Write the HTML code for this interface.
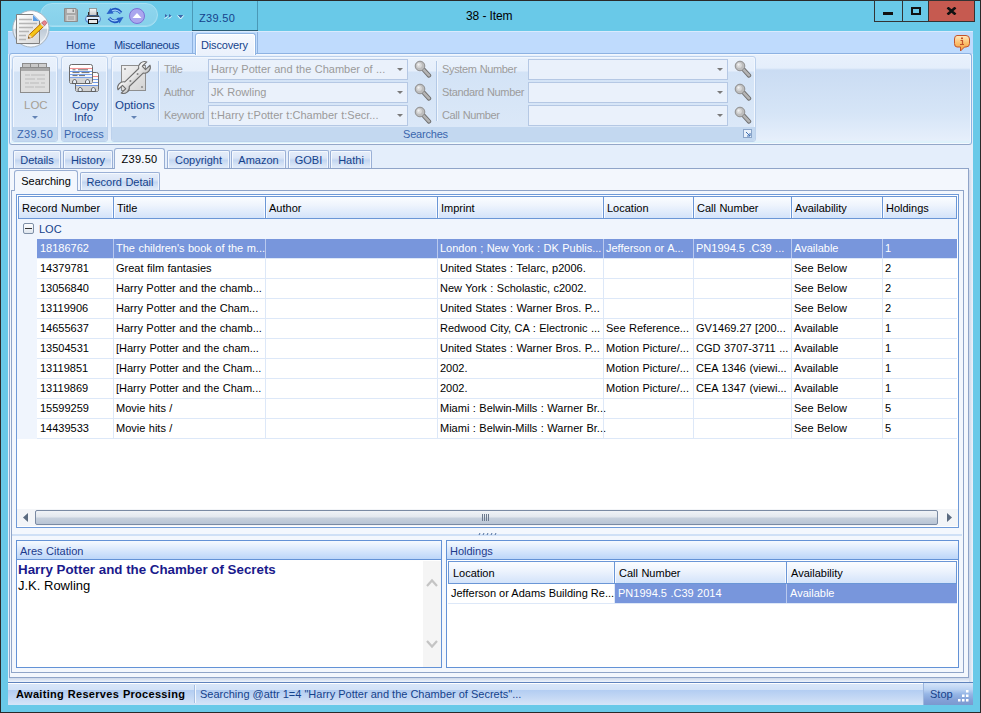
<!DOCTYPE html>
<html><head><meta charset="utf-8">
<style>
*{margin:0;padding:0;box-sizing:border-box}
html,body{width:981px;height:713px;overflow:hidden}
body{position:relative;background:#2a2a2a;font-family:"Liberation Sans",sans-serif;font-size:11px;color:#000;letter-spacing:0;word-spacing:0.4px}
.a{position:absolute}
.t{position:absolute;white-space:nowrap;line-height:12px}
.blue{color:#15428b}
</style></head><body>
<div class="a" style="left:1px;top:1px;width:979px;height:711px;background:#69c9e8"></div>
<div class="a" style="left:8px;top:31px;width:965px;height:674px;background:#e4eefb"></div>
<!-- QAT pill -->
<div class="a" style="left:40px;top:3px;width:118px;height:24px;border-radius:12px;background:linear-gradient(#8fd6ee,#86d0ea);border:1px solid #a7e0f3;box-shadow:inset 0 -1px 0 #9ad9ef"></div>
<!-- app button -->
<svg class="a" style="z-index:6;left:12px;top:10px" width="40" height="40" viewBox="0 0 40 40">
  <defs>
   <linearGradient id="cg" x1="0" y1="0" x2="0" y2="1"><stop offset="0" stop-color="#ffffff"/><stop offset=".48" stop-color="#eef1f4"/><stop offset=".52" stop-color="#bfcad6"/><stop offset=".8" stop-color="#d4dde6"/><stop offset="1" stop-color="#f2f5f8"/></linearGradient>
   <linearGradient id="dg" x1="0" y1="0" x2="1" y2="1"><stop offset="0" stop-color="#ffffff"/><stop offset="1" stop-color="#d6d6d6"/></linearGradient>
  </defs>
  <circle cx="18.9" cy="18.9" r="18.2" fill="url(#cg)" stroke="#a9b6c3" stroke-width="1"/>
  <circle cx="18.9" cy="18.9" r="16.8" fill="none" stroke="#ffffff" stroke-opacity=".7" stroke-width="1"/>
  <path d="M4.5 4.5 H21 L27.5 11 V33.5 H4.5 Z" fill="url(#dg)" stroke="#7f7f7f" stroke-width="1"/>
  <path d="M21 4.5 L27.5 11 H21 Z" fill="#5d9fe6"/><path d="M21.5 5 L27 10.5" stroke="#e8f3ff" stroke-width=".8"/>
  <path d="M7 9.5h13M7 13.5h18M7 17.5h14M7 21.5h10M7 25.5h7M7 29.5h7" stroke="#b5b5b5" stroke-width="1.3"/>
  <g transform="translate(16.3 28.3) rotate(-43.5)">
    <path d="M0 0 L3.5 -2 H20 V2 H3.5 Z" fill="#f5c518" stroke="#b26500" stroke-width=".9" stroke-linejoin="round"/>
    <path d="M0 0 L3.5 -2 V2 Z" fill="#f6d9b0"/>
    <path d="M0 0 L1.3 -.75 V.75 Z" fill="#111"/>
    <rect x="18.5" y="-2" width="2" height="4" fill="#d8d8d8"/>
    <path d="M20.5 -2 H22.5 A2 2 0 0 1 22.5 2 H20.5 Z" fill="#e8848e" stroke="#b05060" stroke-width=".6"/>
  </g>
</svg>
<!-- save -->
<svg class="a" style="left:64px;top:8px" width="14" height="14" viewBox="0 0 14 14">
  <path d="M.5 .5H12L13.5 2V13.5H.5Z" fill="#a9a9a9" stroke="#8c8c8c"/>
  <rect x="3" y="1" width="8" height="4" fill="#d8d8d8"/><rect x="8.5" y="1.5" width="1.5" height="2.5" fill="#888"/>
  <rect x="2.5" y="7" width="9" height="6" fill="#d0d0d0"/><path d="M4 9h6M4 11h6" stroke="#9a9a9a"/>
</svg>
<!-- print -->
<svg class="a" style="left:84px;top:7px" width="18" height="18" viewBox="0 0 18 18">
  <defs><linearGradient id="pp" x1="0" y1="0" x2="0" y2="1"><stop offset="0" stop-color="#fafafa"/><stop offset="1" stop-color="#bdbdbd"/></linearGradient>
  <linearGradient id="pb" x1="0" y1="0" x2="0" y2="1"><stop offset="0" stop-color="#ffffff"/><stop offset=".5" stop-color="#cfe4fb"/><stop offset="1" stop-color="#6fa4e6"/></linearGradient></defs>
  <rect x="4" y="5" width="10" height="5" fill="#2b2b2b"/>
  <rect x="5.5" y="1.5" width="7" height="8" fill="url(#pp)" stroke="#888" stroke-width=".8"/>
  <rect x="1.5" y="8.5" width="15" height="7" rx="3.5" fill="url(#pb)" stroke="#4b7fc8" stroke-width="1"/>
  <path d="M3 9.2h12" stroke="#222" stroke-width="1.2"/>
  <path d="M6 12.5h6" stroke="#1f3f7a" stroke-width="1"/>
  <rect x="4.5" y="12.5" width="9" height="4" fill="#e8e8e8" stroke="#111" stroke-width="1"/>
</svg>
<!-- refresh -->
<svg class="a" style="left:106px;top:7px" width="18" height="18" viewBox="0 0 18 18">
  <path d="M4 5 Q9.5 -0.5 15 5.8" stroke="#1f55c0" stroke-width="3.4" fill="none"/>
  <path d="M4.3 5 Q9.5 0.8 14.5 5.6" stroke="#9fd0fb" stroke-width="1.2" fill="none"/>
  <path d="M0.5 7 L4.5 1 L7.5 6.5 Z" fill="#2a63c9"/>
  <path d="M14 12 Q8.5 17.5 3 11.2" stroke="#1f55c0" stroke-width="3.4" fill="none"/>
  <path d="M13.7 12 Q8.5 16.2 3.5 11.5" stroke="#9fd0fb" stroke-width="1.2" fill="none"/>
  <path d="M17.5 10 L13.5 16.5 L10.5 11 Z" fill="#2a63c9"/>
</svg>
<!-- up circle -->
<svg class="a" style="left:129px;top:8px" width="16" height="16" viewBox="0 0 16 16">
  <circle cx="8" cy="8" r="7.5" fill="#aaa6ee" stroke="#7d70d6"/>
  <path d="M3.5 10 L8 5 L12.5 10 Z" fill="#fff"/>
</svg>
<!-- >> v -->
<svg class="a" style="left:163px;top:12px" width="22" height="10" viewBox="0 0 22 10">
  <path d="M1.5 6.5 L4.5 4.5 M5.5 6.5 L8.5 4.5" stroke="#f4fbff" stroke-width="1"/>
  <path d="M2 2 L4.4 3.8 L2 5.4 Z M6 2 L8.4 3.8 L6 5.4 Z" fill="#3d64a8"/>
  <path d="M14.5 3.5 L17.6 7 L20.7 3.5" stroke="#f4fbff" stroke-width="1" fill="none"/>
  <path d="M15 3 H20.2 L17.6 6 Z" fill="#3d64a8"/>
</svg>
<!-- contextual header -->
<div class="a" style="left:192px;top:1px;width:1px;height:30px;background:#4b98b6"></div>
<div class="a" style="left:257px;top:1px;width:1px;height:30px;background:#4b98b6"></div>
<div class="a" style="left:192px;top:30px;width:66px;height:1px;background:#2b5d73"></div>
<div class="t blue" style="left:199px;top:12px;letter-spacing:0.3px">Z39.50</div>
<!-- title -->
<div class="t" style="left:466px;top:10px;color:#000;font-size:12px;letter-spacing:-0.1px;word-spacing:0">38 - Item</div>
<!-- window controls -->
<div class="a" style="left:874px;top:0px;width:101px;height:22px;border:1px solid #333;background:#69c9e8"></div>
<div class="a" style="left:902px;top:0px;width:1px;height:22px;background:#333"></div>
<div class="a" style="left:928px;top:0px;width:1px;height:22px;background:#333"></div>
<div class="a" style="left:929px;top:1px;width:45px;height:20px;background:#c65a50"></div>
<div class="a" style="left:883px;top:12px;width:10px;height:3px;background:#111"></div>
<div class="a" style="left:911px;top:7px;width:10px;height:8px;border:2px solid #111"></div>
<svg class="a" style="left:946px;top:7px" width="11" height="8" viewBox="0 0 11 8"><path d="M1.5 0.5 L9.5 7.5 M9.5 0.5 L1.5 7.5" stroke="#111" stroke-width="2.6"/></svg>
<!-- ribbon tab row -->
<div class="a" style="left:8px;top:31px;width:965px;height:23px;background:#bfdbfd"></div>
<div class="t blue" style="left:66px;top:39px">Home</div>
<div class="t blue" style="left:114px;top:39px;letter-spacing:-0.35px">Miscellaneous</div>
<div class="a" style="left:192px;top:31px;width:1px;height:22px;background:#8fb2df"></div>
<div class="a" style="left:257px;top:31px;width:1px;height:22px;background:#8fb2df"></div>
<div class="a" style="left:193px;top:31px;width:64px;height:1px;background:#e6f1fd"></div>
<!-- ribbon body -->
<div class="a" style="left:9px;top:53px;width:963px;height:92px;border:1px solid #8db2e2;border-bottom-color:#93a7c8;border-radius:3px;background:linear-gradient(#e9f1fc 0px,#e4eefb 14px,#cadcf3 16px,#d6e5f7 60px,#e6effb 86px,#d9f3fb 89px);box-shadow:inset 0 0 0 1px #f3f8fe"></div>
<div class="a" style="left:8px;top:33px;width:1px;height:0"></div>
<div class="a" style="left:195px;top:33px;width:61px;height:22px;border:1px solid #8fb4e2;border-bottom:none;border-radius:3px 3px 0 0;background:linear-gradient(#f6f9fe,#eaf1fc);box-shadow:inset 1px 1px 0 #fff,inset -1px 0 0 #fff"></div>
<div class="t blue" style="left:201px;top:39px;letter-spacing:-0.15px">Discovery</div>
<!-- group 1 -->
<div class="a" style="left:12px;top:56px;width:46px;height:86px;border:1px solid #bcd1ec;border-radius:3px;background:linear-gradient(#eaf2fc 0px,#e6effb 14px,#d3e3f6 15px,#dbe8f8 70px);box-shadow:inset 0 0 0 1px #f2f7fe"></div>
<div class="a" style="left:13px;top:127px;width:44px;height:14px;background:#c3d8f0;border-radius:0 0 2px 2px"></div>
<div class="t" style="left:17px;top:128px;letter-spacing:0.3px;color:#3a66ad">Z39.50</div>
<!-- group 2 -->
<div class="a" style="left:61px;top:56px;width:47px;height:86px;border:1px solid #bcd1ec;border-radius:3px;background:linear-gradient(#eaf2fc 0px,#e6effb 14px,#d3e3f6 15px,#dbe8f8 70px);box-shadow:inset 0 0 0 1px #f2f7fe"></div>
<div class="a" style="left:62px;top:127px;width:45px;height:14px;background:#c3d8f0;border-radius:0 0 2px 2px"></div>
<div class="t" style="left:64px;top:128px;color:#3a66ad">Process</div>
<!-- group 3 -->
<div class="a" style="left:111px;top:56px;width:645px;height:86px;border:1px solid #bcd1ec;border-radius:3px;background:linear-gradient(#eaf2fc 0px,#e6effb 14px,#d3e3f6 15px,#dbe8f8 70px);box-shadow:inset 0 0 0 1px #f2f7fe"></div>
<div class="a" style="left:112px;top:127px;width:643px;height:14px;background:#c3d8f0;border-radius:0 0 2px 2px"></div>
<div class="t" style="left:403px;top:128px;color:#3a66ad;letter-spacing:-0.2px">Searches</div>
<svg class="a" style="left:743px;top:129px" width="9" height="9" viewBox="0 0 9 9"><rect x=".5" y=".5" width="8" height="8" fill="#e8f0fa" stroke="#8aa4c8"/><path d="M3 3l4 4M7 4v3H4" stroke="#3f6fb0" fill="none"/></svg>

<!-- LOC icon -->
<svg class="a" style="left:20px;top:63px" width="30" height="30" viewBox="0 0 30 30">
  <rect x="2.5" y=".5" width="8" height="6" fill="#c4c4c4" stroke="#8c8c8c"/>
  <rect x="10.5" y=".5" width="8" height="6" fill="#c9c9c9" stroke="#8c8c8c"/>
  <rect x="18.5" y=".5" width="8" height="6" fill="#cfcfcf" stroke="#8c8c8c"/>
  <rect x=".5" y="4.5" width="29" height="25" fill="#dedede" stroke="#8c8c8c"/>
  <rect x="1" y="5" width="28" height="3" fill="#a9a9a9"/>
  <path d="M5 12h5M11 12h14M5 16h10M17 16h8M5 20h4M10 20h9M21 20h4M5 24h9M15 24h10" stroke="#b9b9b9" stroke-width="1.2"/>
</svg>
<div class="t" style="left:24px;top:99px;color:#a69f94;font-size:11.5px">LOC</div>
<svg class="a" style="left:32px;top:116px" width="6" height="4"><path d="M0 0h6l-3 3z" fill="#6383b5"/></svg>
<!-- Copy info icon -->
<svg class="a" style="left:62px;top:58px" width="44" height="40" viewBox="0 0 44 40">
  <rect x="13.5" y="14.5" width="23" height="19" rx="2" fill="#fafafa" stroke="#6a6a6a"/>
  <path d="M31 18.5h5" stroke="#f08a8a"/><path d="M31 21.5h5M31 24.5h5M14 27.5h22" stroke="#6f9ae8"/>
  <rect x="14" y="28" width="22" height="5" fill="#d2d2d2"/>
  <path d="M16.2 33.5V31L18.2 29L20.2 31V33.5Z M29.4 33.5V31L31.4 29L33.4 31V33.5Z" fill="#e4ecf6" stroke="#555" stroke-width=".9"/>
  <rect x="7.5" y="6.5" width="23" height="19" rx="2" fill="#fff" stroke="#6a6a6a"/>
  <path d="M8 10.5h22" stroke="#f39090" stroke-width="1.1"/>
  <path d="M8 13.5h22M8 16.6h22M8 19.4h22" stroke="#6f9ae8" stroke-width="1"/>
  <path d="M10.5 11.8h3M16 11.8h10M10.5 14.6h7M19.5 14.6h8M10.5 17.6h5M17 17.6h6" stroke="#5a5a5a" stroke-width=".9"/>
  <rect x="8" y="20" width="22" height="5" fill="#d6d6d6"/>
  <path d="M10.6 25.5V23L12.6 21L14.6 23V25.5Z M23.5 25.5V23L25.5 21L27.5 23V25.5Z" fill="#e4ecf6" stroke="#555" stroke-width=".9"/>
</svg>
<div class="t blue" style="left:72px;top:99px;font-size:11.5px">Copy</div>
<div class="t blue" style="left:74px;top:111px;font-size:11.5px">Info</div>
<!-- Options icon -->
<svg class="a" style="left:112px;top:58px" width="44" height="40" viewBox="0 0 44 40">
  <defs><linearGradient id="sq" x1="0" y1="0" x2="1" y2="1"><stop offset="0" stop-color="#f2f2f2"/><stop offset="1" stop-color="#d2d2d2"/></linearGradient>
  <linearGradient id="wr" x1="0" y1="0" x2="0" y2="1"><stop offset="0" stop-color="#fafafa"/><stop offset="1" stop-color="#c8c8c8"/></linearGradient></defs>
  <rect x="9.5" y="7.5" width="24" height="25" fill="url(#sq)" stroke="#8e8e8e"/>
  <circle cx="13" cy="11" r="1" fill="#8a8a8a"/><circle cx="30" cy="29" r="1" fill="#8a8a8a"/>
  <g transform="translate(22 19.5) rotate(-44)">
    <path d="M-9.63 -3.2 L9.63 -3.2 A6 6 0 0 1 20.04 -2.3 L13.8 -2.3 L13.8 2.3 L20.04 2.3 A6 6 0 0 1 9.63 3.2 L-9.63 3.2 A6 6 0 0 1 -20.04 2.3 L-13.8 2.3 L-13.8 -2.3 L-20.04 -2.3 A6 6 0 0 1 -9.63 -3.2 Z" fill="url(#wr)" stroke="#6e6e6e" stroke-width="1.1" stroke-linejoin="round"/>
    <circle cx="-5" cy="0" r="1" fill="#888"/><circle cx="5" cy="0" r="1" fill="#888"/>
  </g>
</svg>
<div class="t blue" style="left:115px;top:99px;font-size:11.5px">Options</div>
<svg class="a" style="left:131px;top:116px" width="6" height="4"><path d="M0 0h6l-3 3z" fill="#6383b5"/></svg>
<!-- separators -->
<div class="a" style="left:158px;top:61px;width:1px;height:60px;background:#b3c9e6;box-shadow:1px 0 0 #f0f6fd"></div>
<div class="a" style="left:436px;top:61px;width:1px;height:60px;background:#b3c9e6;box-shadow:1px 0 0 #f0f6fd"></div>
<!-- labels -->
<div class="t" style="left:164px;top:63px;color:#9c9c9c;letter-spacing:-0.35px">Title</div>
<div class="t" style="left:164px;top:86px;color:#9c9c9c;letter-spacing:-0.35px">Author</div>
<div class="t" style="left:164px;top:109px;color:#9c9c9c;letter-spacing:-0.35px">Keyword</div>
<div class="t" style="left:442px;top:63px;color:#9c9c9c;letter-spacing:-0.35px">System Number</div>
<div class="t" style="left:442px;top:86px;color:#9c9c9c;letter-spacing:-0.35px">Standard Number</div>
<div class="t" style="left:442px;top:109px;color:#9c9c9c;letter-spacing:-0.35px">Call Number</div>
<div class="a" style="left:208px;top:59px;width:200px;height:21px;border:1px solid #b5c8e4;background:#eaf1fb"></div>
<div class="t" style="left:211px;top:63px;color:#9a9a9a">Harry Potter and the Chamber of ...</div>
<svg class="a" style="left:397px;top:68px" width="6" height="4"><path d="M0 0h6l-3 3z" fill="#7a7a7a"/></svg>
<svg class="a" style="left:414px;top:60px" width="18" height="18" viewBox="0 0 18 18"><path d="M9.8 9.8l5.2 5.6" stroke="#6f6f6f" stroke-width="4.4" stroke-linecap="round"/><path d="M9.8 9.8l5.2 5.6" stroke="#b4b4b4" stroke-width="2.6" stroke-linecap="round"/><circle cx="6" cy="6" r="4.8" fill="#bdbdbd" stroke="#8e8e8e" stroke-width="1"/><circle cx="5.2" cy="5.2" r="2.6" fill="#d9d9d9"/><circle cx="4.6" cy="4.6" r="1.1" fill="#f2f2f2"/></svg>
<div class="a" style="left:528px;top:59px;width:200px;height:21px;border:1px solid #b5c8e4;background:#eaf1fb"></div>
<svg class="a" style="left:717px;top:68px" width="6" height="4"><path d="M0 0h6l-3 3z" fill="#7a7a7a"/></svg>
<svg class="a" style="left:734px;top:60px" width="18" height="18" viewBox="0 0 18 18"><path d="M9.8 9.8l5.2 5.6" stroke="#6f6f6f" stroke-width="4.4" stroke-linecap="round"/><path d="M9.8 9.8l5.2 5.6" stroke="#b4b4b4" stroke-width="2.6" stroke-linecap="round"/><circle cx="6" cy="6" r="4.8" fill="#bdbdbd" stroke="#8e8e8e" stroke-width="1"/><circle cx="5.2" cy="5.2" r="2.6" fill="#d9d9d9"/><circle cx="4.6" cy="4.6" r="1.1" fill="#f2f2f2"/></svg>
<div class="a" style="left:208px;top:82px;width:200px;height:21px;border:1px solid #b5c8e4;background:#eaf1fb"></div>
<div class="t" style="left:211px;top:86px;color:#9a9a9a">JK Rowling</div>
<svg class="a" style="left:397px;top:91px" width="6" height="4"><path d="M0 0h6l-3 3z" fill="#7a7a7a"/></svg>
<svg class="a" style="left:414px;top:83px" width="18" height="18" viewBox="0 0 18 18"><path d="M9.8 9.8l5.2 5.6" stroke="#6f6f6f" stroke-width="4.4" stroke-linecap="round"/><path d="M9.8 9.8l5.2 5.6" stroke="#b4b4b4" stroke-width="2.6" stroke-linecap="round"/><circle cx="6" cy="6" r="4.8" fill="#bdbdbd" stroke="#8e8e8e" stroke-width="1"/><circle cx="5.2" cy="5.2" r="2.6" fill="#d9d9d9"/><circle cx="4.6" cy="4.6" r="1.1" fill="#f2f2f2"/></svg>
<div class="a" style="left:528px;top:82px;width:200px;height:21px;border:1px solid #b5c8e4;background:#eaf1fb"></div>
<svg class="a" style="left:717px;top:91px" width="6" height="4"><path d="M0 0h6l-3 3z" fill="#7a7a7a"/></svg>
<svg class="a" style="left:734px;top:83px" width="18" height="18" viewBox="0 0 18 18"><path d="M9.8 9.8l5.2 5.6" stroke="#6f6f6f" stroke-width="4.4" stroke-linecap="round"/><path d="M9.8 9.8l5.2 5.6" stroke="#b4b4b4" stroke-width="2.6" stroke-linecap="round"/><circle cx="6" cy="6" r="4.8" fill="#bdbdbd" stroke="#8e8e8e" stroke-width="1"/><circle cx="5.2" cy="5.2" r="2.6" fill="#d9d9d9"/><circle cx="4.6" cy="4.6" r="1.1" fill="#f2f2f2"/></svg>
<div class="a" style="left:208px;top:105px;width:200px;height:21px;border:1px solid #b5c8e4;background:#eaf1fb"></div>
<div class="t" style="left:211px;top:109px;color:#9a9a9a">t:Harry t:Potter t:Chamber t:Secr...</div>
<svg class="a" style="left:397px;top:114px" width="6" height="4"><path d="M0 0h6l-3 3z" fill="#7a7a7a"/></svg>
<svg class="a" style="left:414px;top:106px" width="18" height="18" viewBox="0 0 18 18"><path d="M9.8 9.8l5.2 5.6" stroke="#6f6f6f" stroke-width="4.4" stroke-linecap="round"/><path d="M9.8 9.8l5.2 5.6" stroke="#b4b4b4" stroke-width="2.6" stroke-linecap="round"/><circle cx="6" cy="6" r="4.8" fill="#bdbdbd" stroke="#8e8e8e" stroke-width="1"/><circle cx="5.2" cy="5.2" r="2.6" fill="#d9d9d9"/><circle cx="4.6" cy="4.6" r="1.1" fill="#f2f2f2"/></svg>
<div class="a" style="left:528px;top:105px;width:200px;height:21px;border:1px solid #b5c8e4;background:#eaf1fb"></div>
<svg class="a" style="left:717px;top:114px" width="6" height="4"><path d="M0 0h6l-3 3z" fill="#7a7a7a"/></svg>
<svg class="a" style="left:734px;top:106px" width="18" height="18" viewBox="0 0 18 18"><path d="M9.8 9.8l5.2 5.6" stroke="#6f6f6f" stroke-width="4.4" stroke-linecap="round"/><path d="M9.8 9.8l5.2 5.6" stroke="#b4b4b4" stroke-width="2.6" stroke-linecap="round"/><circle cx="6" cy="6" r="4.8" fill="#bdbdbd" stroke="#8e8e8e" stroke-width="1"/><circle cx="5.2" cy="5.2" r="2.6" fill="#d9d9d9"/><circle cx="4.6" cy="4.6" r="1.1" fill="#f2f2f2"/></svg>
<div class="a" style="left:8px;top:31px;width:965px;height:1px;background:#d9eafd"></div>
<svg class="a" style="left:953px;top:34px" width="18" height="18" viewBox="0 0 18 18">
  <defs><linearGradient id="og" x1="0" y1="0" x2="0" y2="1"><stop offset="0" stop-color="#ffe9c2"/><stop offset=".5" stop-color="#fbbf6a"/><stop offset="1" stop-color="#f59c3c"/></linearGradient></defs>
  <path d="M4 1.5 H13 Q16.5 1.5 16.5 5 V9.5 Q16.5 13 13 13 H11.5 L7.5 17 L7.5 13 H4 Q1.5 13 1.5 9.5 V5 Q1.5 1.5 4 1.5 Z" fill="url(#og)" stroke="#c4532a" stroke-width="1"/>
  <rect x="8" y="3.5" width="2" height="1.6" fill="#c4532a"/><path d="M7.5 6.5h2v4h1M7 10.5h4" stroke="#c4532a" stroke-width="1.2" fill="none"/>
</svg>
<div class="a" style="left:9px;top:168px;width:960px;height:510px;border:1px solid #8fa4c8;background:#f3f7fd"></div>
<div class="a" style="left:9px;top:678px;width:960px;height:4px;background:linear-gradient(#cdd8ea,#eef4fc)"></div>
<div class="a" style="left:969px;top:170px;width:4px;height:512px;background:linear-gradient(90deg,#cdd8ea,#eef4fc)"></div>
<div class="a" style="left:13px;top:150px;width:48px;height:18px;border:1px solid #9ab0d6;border-bottom:none;border-radius:2px 2px 0 0;background:linear-gradient(#e6eefa 0%,#dbe6f7 40%,#c3d6f1 55%,#d5e3f6 80%,#e2ecfa 100%);box-shadow:inset 1px 1px 0 #f5f9fe,inset -1px 0 0 #f0f5fd"></div>
<div class="t blue" style="left:13px;width:48px;text-align:center;top:154px">Details</div>
<div class="a" style="left:63px;top:150px;width:50px;height:18px;border:1px solid #9ab0d6;border-bottom:none;border-radius:2px 2px 0 0;background:linear-gradient(#e6eefa 0%,#dbe6f7 40%,#c3d6f1 55%,#d5e3f6 80%,#e2ecfa 100%);box-shadow:inset 1px 1px 0 #f5f9fe,inset -1px 0 0 #f0f5fd"></div>
<div class="t blue" style="left:63px;width:50px;text-align:center;top:154px">History</div>
<div class="a" style="left:167px;top:150px;width:63px;height:18px;border:1px solid #9ab0d6;border-bottom:none;border-radius:2px 2px 0 0;background:linear-gradient(#e6eefa 0%,#dbe6f7 40%,#c3d6f1 55%,#d5e3f6 80%,#e2ecfa 100%);box-shadow:inset 1px 1px 0 #f5f9fe,inset -1px 0 0 #f0f5fd"></div>
<div class="t blue" style="left:167px;width:63px;text-align:center;top:154px">Copyright</div>
<div class="a" style="left:231px;top:150px;width:55px;height:18px;border:1px solid #9ab0d6;border-bottom:none;border-radius:2px 2px 0 0;background:linear-gradient(#e6eefa 0%,#dbe6f7 40%,#c3d6f1 55%,#d5e3f6 80%,#e2ecfa 100%);box-shadow:inset 1px 1px 0 #f5f9fe,inset -1px 0 0 #f0f5fd"></div>
<div class="t blue" style="left:231px;width:55px;text-align:center;top:154px">Amazon</div>
<div class="a" style="left:288px;top:150px;width:41px;height:18px;border:1px solid #9ab0d6;border-bottom:none;border-radius:2px 2px 0 0;background:linear-gradient(#e6eefa 0%,#dbe6f7 40%,#c3d6f1 55%,#d5e3f6 80%,#e2ecfa 100%);box-shadow:inset 1px 1px 0 #f5f9fe,inset -1px 0 0 #f0f5fd"></div>
<div class="t blue" style="left:288px;width:41px;text-align:center;top:154px">GOBI</div>
<div class="a" style="left:330px;top:150px;width:42px;height:18px;border:1px solid #9ab0d6;border-bottom:none;border-radius:2px 2px 0 0;background:linear-gradient(#e6eefa 0%,#dbe6f7 40%,#c3d6f1 55%,#d5e3f6 80%,#e2ecfa 100%);box-shadow:inset 1px 1px 0 #f5f9fe,inset -1px 0 0 #f0f5fd"></div>
<div class="t blue" style="left:330px;width:42px;text-align:center;top:154px">Hathi</div>
<div class="a" style="left:114px;top:148px;width:51px;height:21px;border:1px solid #98aed3;border-bottom:none;border-radius:3px 3px 0 0;background:#f3f7fd"></div>
<div class="t" style="left:114px;width:51px;text-align:center;top:153px;letter-spacing:0.3px">Z39.50</div>
<div class="a" style="left:11px;top:190px;width:953px;height:483px;border:1px solid #8fa4c8;background:#f3f7fd"></div>
<div class="a" style="left:80px;top:172px;width:80px;height:18px;border:1px solid #9ab0d6;border-bottom:none;border-radius:2px 2px 0 0;background:linear-gradient(#e6eefa 0%,#dbe6f7 40%,#c3d6f1 55%,#d5e3f6 80%,#e2ecfa 100%);box-shadow:inset 1px 1px 0 #f5f9fe,inset -1px 0 0 #f0f5fd"></div>
<div class="t blue" style="left:80px;width:80px;text-align:center;top:176px">Record Detail</div>
<div class="a" style="left:14px;top:170px;width:64px;height:21px;border:1px solid #98aed3;border-bottom:none;border-radius:3px 3px 0 0;background:#f3f7fd"></div>
<div class="t" style="left:14px;width:64px;text-align:center;top:175px">Searching</div>
<div class="a" style="left:16px;top:194px;width:943px;height:334px;border:1px solid #6f9ad8;background:#fff"></div>
<div class="a" style="left:18px;top:196px;width:939px;height:23px;border:1px solid #6a96d6;background:linear-gradient(#fbfdff,#eef4fd 40%,#d3e3fa)"></div>
<div class="t" style="left:22px;top:202px">Record Number</div>
<div class="a" style="left:113px;top:197px;width:1px;height:21px;background:#6a96d6;box-shadow:-1px 0 0 #f7faff,1px 0 0 #f7faff"></div>
<div class="t" style="left:117px;top:202px">Title</div>
<div class="a" style="left:265px;top:197px;width:1px;height:21px;background:#6a96d6;box-shadow:-1px 0 0 #f7faff,1px 0 0 #f7faff"></div>
<div class="t" style="left:269px;top:202px">Author</div>
<div class="a" style="left:437px;top:197px;width:1px;height:21px;background:#6a96d6;box-shadow:-1px 0 0 #f7faff,1px 0 0 #f7faff"></div>
<div class="t" style="left:441px;top:202px">Imprint</div>
<div class="a" style="left:603px;top:197px;width:1px;height:21px;background:#6a96d6;box-shadow:-1px 0 0 #f7faff,1px 0 0 #f7faff"></div>
<div class="t" style="left:607px;top:202px">Location</div>
<div class="a" style="left:693px;top:197px;width:1px;height:21px;background:#6a96d6;box-shadow:-1px 0 0 #f7faff,1px 0 0 #f7faff"></div>
<div class="t" style="left:697px;top:202px">Call Number</div>
<div class="a" style="left:791px;top:197px;width:1px;height:21px;background:#6a96d6;box-shadow:-1px 0 0 #f7faff,1px 0 0 #f7faff"></div>
<div class="t" style="left:795px;top:202px">Availability</div>
<div class="a" style="left:882px;top:197px;width:1px;height:21px;background:#6a96d6;box-shadow:-1px 0 0 #f7faff,1px 0 0 #f7faff"></div>
<div class="t" style="left:886px;top:202px">Holdings</div>
<div class="a" style="left:17px;top:219px;width:941px;height:20px;background:#f0f5fd"></div>
<div class="a" style="left:17px;top:239px;width:20px;height:200px;background:#f0f5fd"></div>
<div class="a" style="left:23px;top:223px;width:11px;height:11px;border:1px solid #7f8fa6;border-radius:2px;background:linear-gradient(#fdfdfd,#dfe6ef)"></div>
<div class="a" style="left:25px;top:228px;width:7px;height:1px;background:#333"></div>
<div class="t" style="left:39px;top:223px;color:#15428b">LOC</div>
<div class="a" style="left:37px;top:239px;width:920px;height:19px;background:#7896dc"></div>
<div class="a" style="left:37px;top:258px;width:920px;height:1px;background:#dde8f8"></div>
<div class="t" style="left:40px;top:242px;color:#fff">18186762</div>
<div class="t" style="left:116px;top:242px;color:#fff">The children's book of the m...</div>
<div class="t" style="left:440px;top:242px;color:#fff">London ; New York : DK Publis...</div>
<div class="t" style="left:606px;top:242px;color:#fff">Jefferson or A...</div>
<div class="t" style="left:696px;top:242px;color:#fff">PN1994.5 .C39 ...</div>
<div class="t" style="left:794px;top:242px;color:#fff">Available</div>
<div class="t" style="left:885px;top:242px;color:#fff">1</div>
<div class="a" style="left:37px;top:278px;width:920px;height:1px;background:#dde8f8"></div>
<div class="t" style="left:40px;top:262px;color:#000">14379781</div>
<div class="t" style="left:116px;top:262px;color:#000">Great film fantasies</div>
<div class="t" style="left:440px;top:262px;color:#000">United States : Telarc, p2006.</div>
<div class="t" style="left:794px;top:262px;color:#000">See Below</div>
<div class="t" style="left:885px;top:262px;color:#000">2</div>
<div class="a" style="left:37px;top:298px;width:920px;height:1px;background:#dde8f8"></div>
<div class="t" style="left:40px;top:282px;color:#000">13056840</div>
<div class="t" style="left:116px;top:282px;color:#000">Harry Potter and the chamb...</div>
<div class="t" style="left:440px;top:282px;color:#000">New York : Scholastic, c2002.</div>
<div class="t" style="left:794px;top:282px;color:#000">See Below</div>
<div class="t" style="left:885px;top:282px;color:#000">2</div>
<div class="a" style="left:37px;top:318px;width:920px;height:1px;background:#dde8f8"></div>
<div class="t" style="left:40px;top:302px;color:#000">13119906</div>
<div class="t" style="left:116px;top:302px;color:#000">Harry Potter and the Cham...</div>
<div class="t" style="left:440px;top:302px;color:#000">United States : Warner Bros. P...</div>
<div class="t" style="left:794px;top:302px;color:#000">See Below</div>
<div class="t" style="left:885px;top:302px;color:#000">2</div>
<div class="a" style="left:37px;top:338px;width:920px;height:1px;background:#dde8f8"></div>
<div class="t" style="left:40px;top:322px;color:#000">14655637</div>
<div class="t" style="left:116px;top:322px;color:#000">Harry Potter and the chamb...</div>
<div class="t" style="left:440px;top:322px;color:#000">Redwood City, CA : Electronic ...</div>
<div class="t" style="left:606px;top:322px;color:#000">See Reference...</div>
<div class="t" style="left:696px;top:322px;color:#000">GV1469.27 [200...</div>
<div class="t" style="left:794px;top:322px;color:#000">Available</div>
<div class="t" style="left:885px;top:322px;color:#000">1</div>
<div class="a" style="left:37px;top:358px;width:920px;height:1px;background:#dde8f8"></div>
<div class="t" style="left:40px;top:342px;color:#000">13504531</div>
<div class="t" style="left:116px;top:342px;color:#000">[Harry Potter and the cham...</div>
<div class="t" style="left:440px;top:342px;color:#000">United States : Warner Bros. P...</div>
<div class="t" style="left:606px;top:342px;color:#000">Motion Picture/...</div>
<div class="t" style="left:696px;top:342px;color:#000">CGD 3707-3711 ...</div>
<div class="t" style="left:794px;top:342px;color:#000">Available</div>
<div class="t" style="left:885px;top:342px;color:#000">1</div>
<div class="a" style="left:37px;top:378px;width:920px;height:1px;background:#dde8f8"></div>
<div class="t" style="left:40px;top:362px;color:#000">13119851</div>
<div class="t" style="left:116px;top:362px;color:#000">[Harry Potter and the Cham...</div>
<div class="t" style="left:440px;top:362px;color:#000">2002.</div>
<div class="t" style="left:606px;top:362px;color:#000">Motion Picture/...</div>
<div class="t" style="left:696px;top:362px;color:#000">CEA 1346 (viewi...</div>
<div class="t" style="left:794px;top:362px;color:#000">Available</div>
<div class="t" style="left:885px;top:362px;color:#000">1</div>
<div class="a" style="left:37px;top:398px;width:920px;height:1px;background:#dde8f8"></div>
<div class="t" style="left:40px;top:382px;color:#000">13119869</div>
<div class="t" style="left:116px;top:382px;color:#000">[Harry Potter and the Cham...</div>
<div class="t" style="left:440px;top:382px;color:#000">2002.</div>
<div class="t" style="left:606px;top:382px;color:#000">Motion Picture/...</div>
<div class="t" style="left:696px;top:382px;color:#000">CEA 1347 (viewi...</div>
<div class="t" style="left:794px;top:382px;color:#000">Available</div>
<div class="t" style="left:885px;top:382px;color:#000">1</div>
<div class="a" style="left:37px;top:418px;width:920px;height:1px;background:#dde8f8"></div>
<div class="t" style="left:40px;top:402px;color:#000">15599259</div>
<div class="t" style="left:116px;top:402px;color:#000">Movie hits /</div>
<div class="t" style="left:440px;top:402px;color:#000">Miami : Belwin-Mills : Warner Br...</div>
<div class="t" style="left:794px;top:402px;color:#000">See Below</div>
<div class="t" style="left:885px;top:402px;color:#000">5</div>
<div class="a" style="left:37px;top:438px;width:920px;height:1px;background:#dde8f8"></div>
<div class="t" style="left:40px;top:422px;color:#000">14439533</div>
<div class="t" style="left:116px;top:422px;color:#000">Movie hits /</div>
<div class="t" style="left:440px;top:422px;color:#000">Miami : Belwin-Mills : Warner Br...</div>
<div class="t" style="left:794px;top:422px;color:#000">See Below</div>
<div class="t" style="left:885px;top:422px;color:#000">5</div>
<div class="a" style="left:113px;top:239px;width:1px;height:200px;background:#dde8f8"></div>
<div class="a" style="left:265px;top:239px;width:1px;height:200px;background:#dde8f8"></div>
<div class="a" style="left:437px;top:239px;width:1px;height:200px;background:#dde8f8"></div>
<div class="a" style="left:603px;top:239px;width:1px;height:200px;background:#dde8f8"></div>
<div class="a" style="left:693px;top:239px;width:1px;height:200px;background:#dde8f8"></div>
<div class="a" style="left:791px;top:239px;width:1px;height:200px;background:#dde8f8"></div>
<div class="a" style="left:882px;top:239px;width:1px;height:200px;background:#dde8f8"></div>
<div class="a" style="left:113px;top:239px;width:1px;height:19px;background:#b9c9ee"></div>
<div class="a" style="left:265px;top:239px;width:1px;height:19px;background:#b9c9ee"></div>
<div class="a" style="left:437px;top:239px;width:1px;height:19px;background:#b9c9ee"></div>
<div class="a" style="left:603px;top:239px;width:1px;height:19px;background:#b9c9ee"></div>
<div class="a" style="left:693px;top:239px;width:1px;height:19px;background:#b9c9ee"></div>
<div class="a" style="left:791px;top:239px;width:1px;height:19px;background:#b9c9ee"></div>
<div class="a" style="left:882px;top:239px;width:1px;height:19px;background:#b9c9ee"></div>
<div class="a" style="left:17px;top:509px;width:941px;height:17px;background:#f3f5f8"></div>
<svg class="a" style="left:23px;top:513px" width="6" height="9"><path d="M5 0v9L0 4.5z" fill="#5b6b80"/></svg>
<svg class="a" style="left:947px;top:513px" width="6" height="9"><path d="M0 0v9L5 4.5z" fill="#5b6b80"/></svg>
<div class="a" style="left:35px;top:510px;width:903px;height:15px;border:1px solid #7a8aa3;border-radius:2px;background:linear-gradient(#f0f3f7 0%,#e3e8ee 45%,#c6d0dd 55%,#b9c5d5 100%)"></div>
<svg class="a" style="left:482px;top:514px" width="8" height="7"><path d="M.5 0v7M2.5 0v7M4.5 0v7M6.5 0v7" stroke="#6b7a8e"/></svg>
<div class="a" style="left:12px;top:534px;width:950px;height:2px;background:#cfe0f6"></div>
<svg class="a" style="left:478px;top:532px" width="20" height="4"><path d="M1 3l1-2M5 3l1-2M9 3l1-2M13 3l1-2M17 3l1-2" stroke="#4f6f9f" stroke-width="1"/></svg>
<div class="a" style="left:16px;top:540px;width:426px;height:128px;border:1px solid #6392d6;background:#fff"></div>
<div class="a" style="left:17px;top:541px;width:424px;height:19px;border-bottom:1px solid #6392d6;background:linear-gradient(#f6faff,#d9e8fc 50%,#bcd6f9)"></div>
<div class="t" style="left:20px;top:545px;color:#1c3a8c">Ares Citation</div>
<div class="a" style="left:423px;top:561px;width:18px;height:106px;background:#f5f5f5"></div>
<svg class="a" style="left:426px;top:578px" width="12" height="9"><path d="M1 8L6 2.5L11 8" stroke="#c4c4c4" stroke-width="2.2" fill="none"/></svg>
<svg class="a" style="left:426px;top:640px" width="12" height="9"><path d="M1 1L6 6.5L11 1" stroke="#c4c4c4" stroke-width="2.2" fill="none"/></svg>
<div class="t" style="left:18px;top:562px;font-size:13.33px;line-height:16px;font-weight:bold;color:#1a1a8c;letter-spacing:0;word-spacing:0">Harry Potter and the Chamber of Secrets</div>
<div class="t" style="left:18px;top:578px;font-size:13px;line-height:16px;color:#000;letter-spacing:0;word-spacing:0">J.K. Rowling</div>
<div class="a" style="left:446px;top:540px;width:513px;height:128px;border:1px solid #6392d6;background:#fff"></div>
<div class="a" style="left:447px;top:541px;width:511px;height:19px;border-bottom:1px solid #6392d6;background:linear-gradient(#f6faff,#d9e8fc 50%,#bcd6f9)"></div>
<div class="t" style="left:450px;top:545px;color:#1c3a8c">Holdings</div>
<div class="a" style="left:448px;top:561px;width:509px;height:23px;border:1px solid #6a96d6;background:linear-gradient(#fbfdff,#eef4fd 40%,#d3e3fa)"></div>
<div class="a" style="left:614px;top:562px;width:1px;height:21px;background:#6a96d6;box-shadow:-1px 0 0 #f7faff,1px 0 0 #f7faff"></div>
<div class="a" style="left:786px;top:562px;width:1px;height:21px;background:#6a96d6;box-shadow:-1px 0 0 #f7faff,1px 0 0 #f7faff"></div>
<div class="t" style="left:453px;top:567px">Location</div>
<div class="t" style="left:619px;top:567px">Call Number</div>
<div class="t" style="left:791px;top:567px">Availability</div>
<div class="a" style="left:615px;top:584px;width:342px;height:19px;background:#7896dc"></div>
<div class="a" style="left:786px;top:584px;width:1px;height:19px;background:#b9c9ee"></div>
<div class="a" style="left:448px;top:603px;width:509px;height:1px;background:#dde8f8"></div>
<div class="a" style="left:614px;top:584px;width:1px;height:19px;background:#dde8f8"></div>
<div class="t" style="left:451px;top:587px;word-spacing:0">Jefferson or Adams Building Re...</div>
<div class="t" style="left:618px;top:587px;color:#fff">PN1994.5 .C39 2014</div>
<div class="t" style="left:790px;top:587px;color:#fff">Available</div>
<div class="a" style="left:8px;top:682px;width:965px;height:23px;border-top:1px solid #5e82bc;background:linear-gradient(#ffffff 0px,#ffffff 1px,#d8e6f9 1px,#d1e1f7 7px,#b2cdf2 7px,#c3d7f4 14px,#d6e5f8 22px)"></div>
<div class="a" style="left:194px;top:685px;width:1px;height:18px;background:#a6bfe2;box-shadow:1px 0 0 #f2f7fe"></div>
<div class="t" style="left:16px;top:688px;font-weight:bold;letter-spacing:0.3px">Awaiting Reserves Processing</div>
<div class="t blue" style="left:200px;top:688px;word-spacing:0">Searching @attr 1=4 "Harry Potter and the Chamber of Secrets"...</div>
<div class="a" style="left:923px;top:683px;width:50px;height:22px;border-left:1px solid #9db7de;background:linear-gradient(#d6e5f9 0%,#b9d1f2 30%,#96b6e6 50%,#829fd6 80%,#7b99cf 100%)"></div>
<div class="t blue" style="left:930px;top:688px">Stop</div>
<svg class="a" style="left:957px;top:689px" width="14" height="14"><g fill="#fff"><rect x="9" y="1" width="2.5" height="2.5"/><rect x="5" y="5.5" width="2.5" height="2.5"/><rect x="9" y="5.5" width="2.5" height="2.5"/><rect x="1" y="10" width="2.5" height="2.5"/><rect x="5" y="10" width="2.5" height="2.5"/><rect x="9" y="10" width="2.5" height="2.5"/></g></svg>

</body></html>
